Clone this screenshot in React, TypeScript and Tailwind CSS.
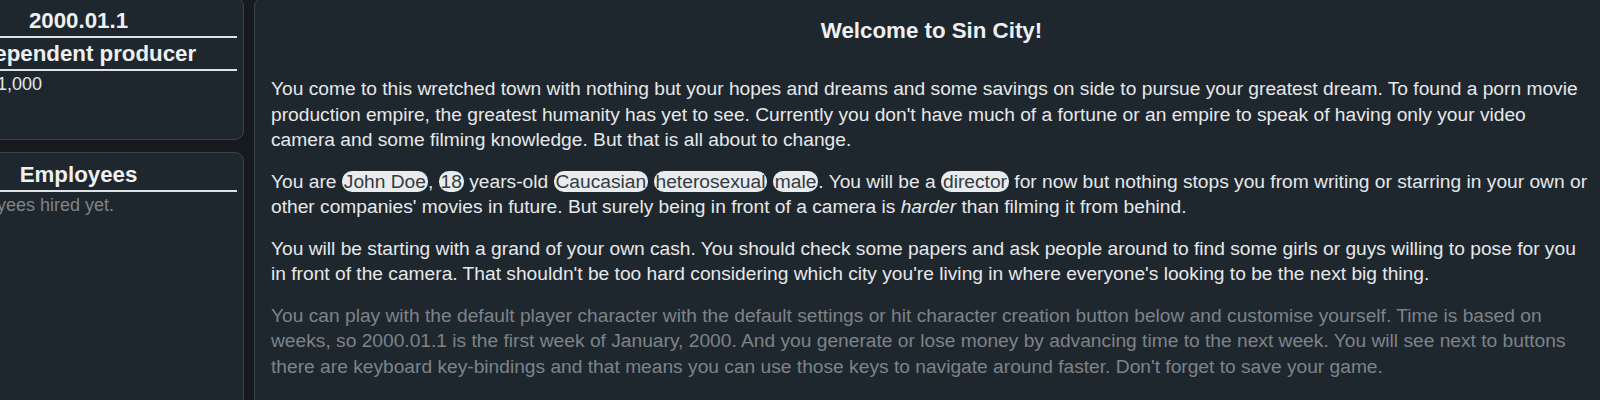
import React from "react";

type PillProp = { t: string };

function Pill({ t }: PillProp) {
  return <span className="bg-[#e9ecef] text-[#343a40] rounded-[10px] px-[2px]">{t}</span>;
}

type PanelProp = {
  className?: string;
  children: React.ReactNode;
};

function Panel({ className, children }: PanelProp) {
  return (
    <div className={"bg-[#1f272e] border border-[#38434c] rounded-[9px] " + (className ?? "")}>
      {children}
    </div>
  );
}

function Heading({ t }: { t: string }) {
  return (
    <h2 className="text-[22.3px] font-bold leading-[31px] text-center whitespace-nowrap border-b-2 border-[#dfe3e6] text-[#eef0f2]">
      {t}
    </h2>
  );
}

function App() {
  return (
    <div className="h-screen w-full overflow-hidden bg-[#161a1e] font-['Liberation_Sans',Arial,sans-serif]">
      <div className="flex gap-[10px] ml-[-87px] mt-[-3px]">
        <div className="w-[331px] shrink-0 flex flex-col gap-3">
          <Panel className="h-[143px] pt-[7px] px-[6px]">
            <Heading t="2000.01.1" />
            <Heading t="Independent producer" />
            <p className="text-[18px] leading-[26px] text-[#e3e6e8] whitespace-nowrap">Budget: $1,000</p>
          </Panel>
          <Panel className="h-[300px] pt-[6px] px-[6px]">
            <Heading t="Employees" />
            <p className="text-[18px] leading-[26px] text-[#7e8489] whitespace-nowrap">No employees hired yet.</p>
          </Panel>
        </div>
        <Panel className="w-[1355px] shrink-0 h-[420px] pt-4 px-4">
          <h1 className="text-[22.3px] font-bold leading-[33px] text-center text-[#eef0f2] mb-[29px]">Welcome to Sin City!</h1>
          <div className="text-[19.2px] leading-[25.5px] text-[#e6e8ea]">
            <p className="mb-4">
              You come to this wretched town with nothing but your hopes and dreams and some savings on side to pursue your greatest dream. To found a porn movie production empire, the greatest humanity has yet to see. Currently you don't have much of a fortune or an empire to speak of having only your video camera and some filming knowledge. But that is all about to change.
            </p>
            <p className="mb-4">
              You are <Pill t="John Doe" />, <Pill t="18" /> years-old <Pill t="Caucasian" /> <Pill t="heterosexual" /> <Pill t="male" />. You will be a <Pill t="director" /> for now but nothing stops you from writing or starring in your own or other companies' movies in future. But surely being in front of a camera is <i>harder</i> than filming it from behind.
            </p>
            <p className="mb-4">
              You will be starting with a grand of your own cash. You should check some papers and ask people around to find some girls or guys willing to pose for you in front of the camera. That shouldn't be too hard considering which city you're living in where everyone's looking to be the next big thing.
            </p>
            <p className="mb-4 text-[#7d8388]">
              You can play with the default player character with the default settings or hit character creation button below and customise yourself. Time is based on weeks, so 2000.01.1 is the first week of January, 2000. And you generate or lose money by advancing time to the next week. You will see next to buttons there are keyboard key-bindings and that means you can use those keys to navigate around faster. Don't forget to save your game.
            </p>
          </div>
        </Panel>
      </div>
    </div>
  );
}

export default App;
